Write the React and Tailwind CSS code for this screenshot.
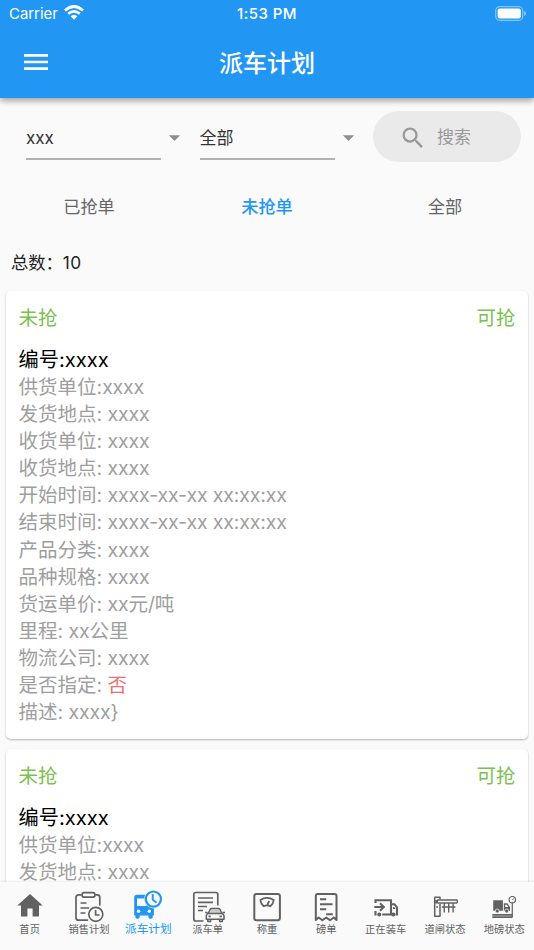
import { MdArrowDropDown, MdMenu, MdSearch } from 'react-icons/md';

const order = [
  { label: '供货单位:', value: 'xxxx' },
  { label: '发货地点: ', value: 'xxxx' },
  { label: '收货单位: ', value: 'xxxx' },
  { label: '收货地点: ', value: 'xxxx' },
  { label: '开始时间: ', value: 'xxxx-xx-xx xx:xx:xx' },
  { label: '结束时间: ', value: 'xxxx-xx-xx xx:xx:xx' },
  { label: '产品分类: ', value: 'xxxx' },
  { label: '品种规格: ', value: 'xxxx' },
  { label: '货运单价: ', value: 'xx元/吨' },
  { label: '里程: ', value: 'xx公里' },
  { label: '物流公司: ', value: 'xxxx' },
  { label: '是否指定: ', value: '否', danger: true },
  { label: '描述: ', value: 'xxxx}' },
];

function Icon({ children }) {
  return (
    <svg viewBox="0 0 36 36" className="h-9 w-9 shrink-0" fill="none" stroke="currentColor" strokeWidth="1.7" strokeLinejoin="round">
      {children}
    </svg>
  );
}

const HomeIcon = () => (
  <Icon>
    <path d="M18 6 30.7 17.6H27V28.4H20.6V20.4H15.4V28.4H9V17.6H5.3Z" fill="currentColor" stroke="none" />
  </Icon>
);

const SalesIcon = () => (
  <Icon>
    <path d="M10.2 6.8H7.5A2.5 2.5 0 0 0 5 9.3V29.7A2.5 2.5 0 0 0 7.5 32.2H17.2M24.5 6.8H26.3A2.5 2.5 0 0 1 28.8 9.3V17.5" />
    <rect x="11" y="4.6" width="13" height="4.6" rx="2.3" />
    <path d="M9.5 15H15.5M9.5 20H18M9.5 25H14.5" />
    <circle cx="24.8" cy="26.3" r="7" />
    <path d="M24.6 22V27H28.6" />
  </Icon>
);

const DispatchIcon = () => (
  <Icon>
    <path d="M7 6.8H15.2A9.4 9.4 0 0 0 23.9 20.4V27.6H22.7V29.3A1.6 1.6 0 0 1 21.1 30.7H20A1.6 1.6 0 0 1 18.4 29.3V27.6H9.7V29.3A1.6 1.6 0 0 1 8.1 30.7H7A1.6 1.6 0 0 1 5.4 29.3V27.6H4.2V9.6A2.8 2.8 0 0 1 7 6.8Z" fill="currentColor" stroke="none" />
    <path d="M7 10.6H14.2Q14.5 15.5 17 18H7Z" fill="#fafafa" stroke="none" />
    <circle cx="8.6" cy="23.3" r="1.7" fill="#fafafa" stroke="none" />
    <circle cx="19.3" cy="23.3" r="1.7" fill="#fafafa" stroke="none" />
    <circle cx="23.4" cy="11.1" r="7.6" strokeWidth="2.2" />
    <path d="M22.7 6V11.8L26.6 14.5" strokeWidth="1.9" />
  </Icon>
);

const DispatchListIcon = () => (
  <Icon>
    <path d="M13.5 33H5.8A2 2 0 0 1 3.8 31V6.5A2 2 0 0 1 5.8 4.5H25.8A2 2 0 0 1 27.8 6.5V17.5M8 10H23M8 14.3H23M8 18.5H17M8 22.5H13" />
    <path d="M18.2 25.5 20.2 21.2Q20.7 20.5 21.8 20.5H28.3Q29.4 20.5 29.9 21.2L31.9 25.5Q34 26 34 28V31.2H16.3V28Q16.3 26 18.2 25.5ZM18.2 25.5H31.9M17.8 31.5V33.5H20.6V31.5M29.6 31.5V33.5H32.4V31.5M15.2 24.5H17.5M32.6 24.5H35" strokeWidth="1.5" />
    <path d="M21 21.5H29L30.6 25H19.6Z" fill="currentColor" stroke="none" opacity=".3" />
    <path d="M18.5 28.3H20.8M29.5 28.3H31.8" />
  </Icon>
);

const ScaleIcon = () => (
  <Icon>
    <rect x="5.3" y="6" width="25.6" height="26.2" rx="2.2" strokeWidth="2" />
    <path d="M11.3 12Q18 7.8 24.8 12Q24.3 15.8 21.4 18.2Q18 16.4 14.7 18.2Q11.8 15.8 11.3 12ZM18.3 17 20.2 13" strokeWidth="1.8" />
  </Icon>
);

const BillIcon = () => (
  <Icon>
    <path d="M7.8 32V8A2 2 0 0 1 9.8 6H26.5A2 2 0 0 1 28.5 8V32L25.8 29.5 22 32.3 18.2 29.5 14.4 32.3 10.6 29.5Z" strokeWidth="2" />
    <path d="M12 11.3H18.2M12 16.3H24.5M12 21.3H18.2M18.2 26.2H24.8" strokeWidth="1.9" />
  </Icon>
);

const LoadingIcon = () => (
  <Icon>
    <path d="M7.5 15V12.2H23V26.5H14.2M7.5 23V26.5H8.6M23 16.2H26.4L29 19.3V26.5H27.6M6.3 19H15.5M12 15.2 15.8 19 12 22.8" strokeWidth="2.1" strokeLinejoin="miter" />
    <circle cx="11.3" cy="26.5" r="2" fill="currentColor" stroke="none" />
    <circle cx="25.4" cy="26.5" r="2" fill="currentColor" stroke="none" />
    <path d="M25 19H26.2L27.5 21H25Z" fill="currentColor" stroke="none" />
  </Icon>
);

const GateIcon = () => (
  <Icon>
    <path d="M13 16V28.3H7.7V9.2H13V11.8M9.3 12V15.5M9.3 19H11" strokeWidth="1.5" />
    <rect x="10.3" y="12" width="20" height="3" rx=".7" strokeWidth="1.4" />
    <path d="M17.3 15.2V24.5M21.7 15.2V24.5M26.1 15.2V24.5M14.8 19H28.5" strokeWidth="1.4" />
  </Icon>
);

const WeighIcon = () => (
  <Icon>
    <path d="M7.2 12.2H16.9V22.8H7.2ZM17.8 15.3H21.4L24 19V23H17.8Z" fill="currentColor" stroke="none" />
    <path d="M19.2 16.7H20.8L22.3 19H19.2Z" fill="#fafafa" stroke="none" />
    <circle cx="11.2" cy="23" r="2" fill="currentColor" stroke="#fafafa" strokeWidth=".7" />
    <circle cx="20.7" cy="23" r="2" fill="currentColor" stroke="#fafafa" strokeWidth=".7" />
    <path d="M6.3 26.9H26.2M6.3 29.2H26.2" strokeWidth="1.7" />
    <path d="M26.3 15V29.4" strokeWidth="1.2" />
    <circle cx="26.3" cy="11.7" r="3.2" strokeWidth="1.2" />
    <path d="M26.3 12 27.8 10.4" strokeWidth="1" />
  </Icon>
);

const navItems = [
  { label: '首页', icon: HomeIcon },
  { label: '销售计划', icon: SalesIcon },
  { label: '派车计划', icon: DispatchIcon, active: true },
  { label: '派车单', icon: DispatchListIcon },
  { label: '称重', icon: ScaleIcon },
  { label: '磅单', icon: BillIcon },
  { label: '正在装车', icon: LoadingIcon },
  { label: '道闸状态', icon: GateIcon },
  { label: '地磅状态', icon: WeighIcon },
];

function StatusBar() {
  return (
    <div className="grid h-7 grid-cols-3 items-center pr-[7px] pl-[9px] text-[15px] leading-7">
      <div className="flex items-center gap-[6px]">
        <span className="text-[14.9px]">Carrier</span>
        <svg viewBox="0 0 20 15" className="mb-[3px] h-[15px] w-5" fill="none" stroke="currentColor" strokeWidth="2.7">
          <path d="M1 5.4Q10-2.4 19 5.4M4.2 8.8Q10 4 15.8 8.8" />
          <path d="M6.6 11.2Q10 8.2 13.4 11.2L10 14.8Z" fill="currentColor" stroke="none" />
        </svg>
      </div>
      <div className="pr-[2px] text-center font-medium tracking-[0.45px]">1:53 PM</div>
      <div className="flex justify-end">
        <svg viewBox="0 0 32 15" className="mb-[2px] h-[15px] w-8">
          <rect x=".7" y=".7" width="27" height="13.6" rx="3.8" fill="none" stroke="white" strokeOpacity=".45" strokeWidth="1.2" />
          <rect x="2.6" y="2.6" width="23.2" height="9.8" rx="2" fill="white" />
          <path d="M29.2 5V10Q31 9.2 31 7.5T29.2 5Z" fill="white" opacity=".5" />
        </svg>
      </div>
    </div>
  );
}

function Select({ value }) {
  return (
    <div className="flex w-[173.5px] items-center pt-[1px]">
      <div className="h-[46px] w-[135px] border-b-2 border-[#b3b3b3] text-[17px] leading-[48px] text-[#333]">{value}</div>
      <MdArrowDropDown className="size-[27px] text-[#8f8f8f]" />
    </div>
  );
}

function OrderCard({ rows }) {
  return (
    <article className="h-[447.5px] shrink-0 rounded-[5px] bg-white px-[12.5px] pt-[14px] text-[19.5px] shadow-[0_1px_2px_rgba(0,0,0,0.28)]">
      <div className="flex justify-between leading-[27px] text-[#7cc04f]">
        <span>未抢</span>
        <span>可抢</span>
      </div>
      <h2 className="mt-[13px] text-[20.2px] leading-[29px] font-normal text-black">编号:xxxx</h2>
      {rows.map((row) => (
        <p key={row.label} className="leading-[27.1px] whitespace-pre text-[#9e9e9e]">
          {row.label}
          <span className={row.danger ? 'text-[#e57373]' : 'tracking-[-0.15px]'}>{row.value}</span>
        </p>
      ))}
    </article>
  );
}

export default function App() {
  return (
    <div className="flex h-[950px] w-[534px] flex-col overflow-hidden bg-[#fafafa] font-['Inter','Noto_Sans_CJK_SC',sans-serif]">
      <header className="relative z-10 h-[98px] shrink-0 bg-[#2196f3] text-white shadow-[0_3px_6px_rgba(0,0,0,0.35)]">
        <StatusBar />
        <div className="grid h-[70px] grid-cols-[72px_1fr_72px] items-center">
          <MdMenu className="mb-[2px] ml-[20px] size-[32px]" />
          <h1 className="pt-[2px] text-center text-[24px] font-medium">派车计划</h1>
        </div>
      </header>

      <main className="flex min-h-0 flex-1 flex-col overflow-hidden">
        <div className="flex h-[77px] shrink-0 items-center pl-[26px]">
          <Select value="xxx" />
          <Select value="全部" />
          <button className="flex h-[51px] w-[148px] items-center rounded-full bg-[#eaeaea] pt-[2px] pl-[26px] text-[17px] text-[#999]">
            <MdSearch className="mr-[10px] size-[28px]" />
            <span>搜索</span>
          </button>
        </div>
        <div className="grid h-[62px] shrink-0 grid-cols-3 items-center pt-[2px] text-center text-[17.2px] text-[#666]">
          <span>已抢单</span>
          <span className="font-medium text-[#2196f3]">未抢单</span>
          <span>全部</span>
        </div>
        <p className="h-[54px] shrink-0 pl-[11px] text-[17.3px] leading-[51px] text-[#222]">
          总数：<span className="tracking-[0.4px]">10</span>
        </p>
        <div className="flex min-h-0 flex-1 flex-col gap-[10.5px] px-[6px]">
          <OrderCard rows={order} />
          <OrderCard rows={order.slice(0, 2)} />
        </div>
      </main>

      <nav className="relative z-10 grid h-[68px] shrink-0 grid-cols-9 bg-[#fafafa] pt-[6px] text-[#616161] shadow-[0_-1px_2px_rgba(0,0,0,0.08)]">
        {navItems.map(({ label, icon: NavIcon, active }) => (
          <div key={label} className={active ? 'flex flex-col items-center text-[#2196f3]' : 'flex flex-col items-center'}>
            <NavIcon />
            <span className={active ? 'text-[11.7px] leading-[10px] whitespace-nowrap' : 'text-[10.3px] leading-[10px] whitespace-nowrap'}>{label}</span>
          </div>
        ))}
      </nav>
    </div>
  );
}
